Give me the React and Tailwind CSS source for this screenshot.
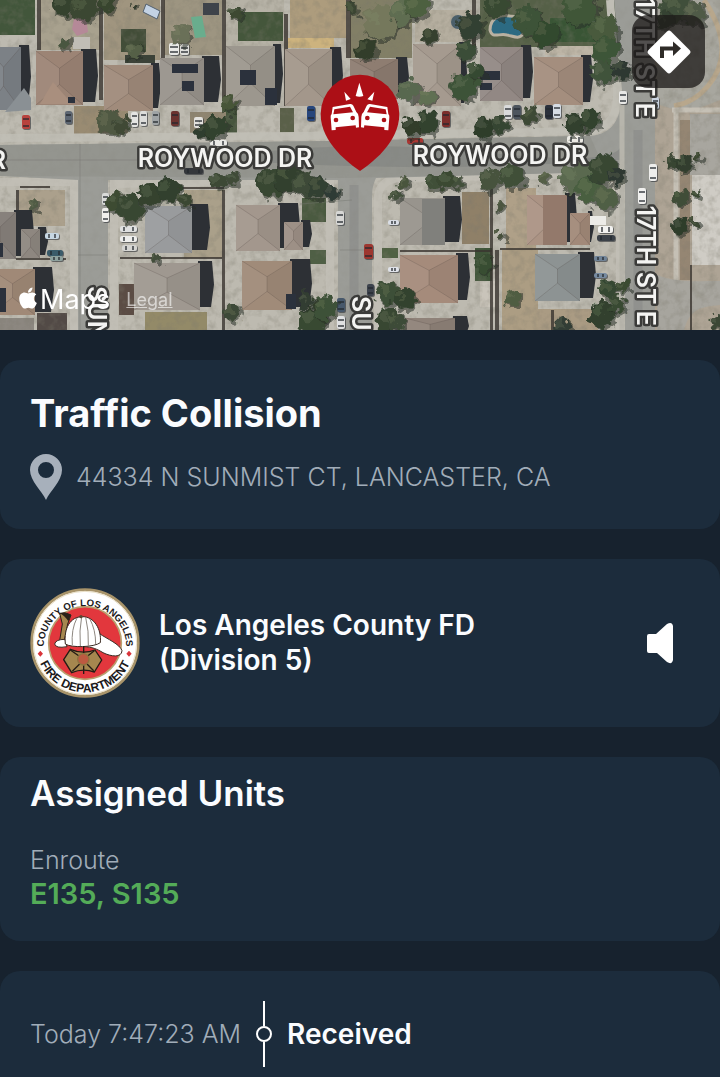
import { FaApple } from 'react-icons/fa'

// [x, y, width, height, roof colour, shadow width]
const ROOFS = [
  [-14, 47, 35, 63, '#7c8186', 10],
  [36, 51, 47, 54, '#9c8475', 15],
  [104, 65, 49, 46, '#a08b7b', 8],
  [160, 58, 44, 47, '#98938c', 17],
  [226, 46, 49, 60, '#9c978e', 8],
  [285, 49, 47, 57, '#a3978b', 11],
  [350, 59, 48, 40, '#8e7d71', 11],
  [413, 44, 48, 62, '#a59a8f', 6],
  [480, 47, 43, 54, '#928884', 10],
  [534, 57, 49, 48, '#a48e7e', 10],
  [-16, 212, 32, 47, '#87817c', 18],
  [21, 229, 19, 29, '#8e8780', 8],
  [-10, 269, 45, 46, '#a08977', 19],
  [145, 206, 47, 47, '#999b9d', 18],
  [134, 263, 66, 47, '#9f9890', 14],
  [236, 205, 44, 46, '#a3978d', 20],
  [284, 222, 19, 28, '#9d9086', 9],
  [242, 261, 50, 49, '#a08b79', 20],
  [400, 198, 45, 47, '#98948d', 17],
  [400, 255, 58, 48, '#a58b7b', 12],
  [405, 318, 50, 20, '#8f8279', 14],
  [527, 195, 40, 50, '#ab9384', 10],
  [570, 213, 20, 32, '#a28979', 4],
  [535, 254, 45, 47, '#8d9393', 16],
]

// [x, y, width, height, colour]
const YARDS = [
  [0, 0, 35, 35, '#42563b'],
  [40, 0, 60, 50, '#a8a18e'],
  [104, 0, 56, 60, '#a0957f'],
  [121, 29, 25, 23, '#424d38'],
  [164, 0, 58, 55, '#9d9581'],
  [226, 0, 58, 46, '#b6b2a6'],
  [238, 12, 45, 29, '#44563b'],
  [290, 0, 56, 38, '#ad9c7d'],
  [288, 38, 46, 10, '#cdb37e'],
  [350, 0, 62, 58, '#827f66'],
  [415, 10, 58, 32, '#b5ae9f'],
  [480, 0, 140, 47, '#556047'],
  [550, 18, 46, 24, '#395535'],
  [545, 46, 50, 9, '#beb6a7'],
  [224, 95, 13, 38, '#46553d'],
  [280, 108, 14, 25, '#5a6049'],
  [74, 106, 54, 29, '#998b72'],
  [190, 112, 36, 22, '#8f8570'],
  [19, 190, 46, 36, '#aba08c'],
  [184, 190, 38, 68, '#aaa08a'],
  [302, 198, 28, 24, '#4a5a40'],
  [310, 250, 18, 14, '#4f5f45'],
  [382, 248, 16, 10, '#506244'],
  [462, 192, 27, 52, '#8f8068'],
  [506, 188, 30, 62, '#afa088'],
  [502, 250, 36, 80, '#ac9d83'],
  [475, 248, 17, 33, '#3f5539'],
  [480, 281, 15, 26, '#c9c4ba'],
  [145, 312, 62, 18, '#938a68'],
  [119, 284, 15, 31, '#5b4c44'],
  [37, 313, 30, 17, '#524a46'],
  [0, 318, 34, 12, '#8c8780'],
  [538, 309, 60, 21, '#aa9b83'],
  [690, 114, 30, 61, '#a8a69f'],
  [692, 175, 28, 90, '#cfccc5'],
  [680, 120, 10, 160, '#958673'],
]

const FENCES = [
  [37, 0, 4, 50], [99, 0, 4, 100], [161, 0, 4, 58], [222, 0, 4, 100],
  [284, 14, 4, 92], [346, 0, 5, 58], [472, 0, 4, 48], [222, 190, 3, 140],
  [16, 190, 3, 38], [490, 188, 3, 142], [16, 258, 50, 2], [120, 257, 102, 2],
  [400, 250, 92, 2], [500, 248, 90, 2], [495, 250, 4, 80], [551, 310, 3, 20],
  [20, 186, 30, 2], [140, 187, 84, 2], [690, 265, 2, 65],
]

// [x, y, width, height]
const PANELS = [
  [172, 64, 26, 9], [182, 81, 12, 10], [240, 70, 16, 15], [265, 88, 12, 17],
  [480, 71, 20, 9], [480, 83, 12, 7], [286, 294, 10, 15], [68, 97, 7, 6],
  [0, 288, 6, 24], [0, 243, 3, 14],
]

// [x, y, radius, colour]
const TREES = [
  [63, 4, 13, '#35422f'], [84, 8, 14, '#3a4631'], [107, 3, 10, '#37452f'],
  [64, 43, 6, '#4a5640'], [133, 50, 9, '#556047'], [182, 35, 10, '#6b7058'],
  [133, 5, 4, '#30392b'], [108, 122, 13, '#4f5842'], [122, 125, 9, '#3f4836'],
  [203, 131, 10, '#2f3d2d'], [215, 127, 12, '#33432f'], [228, 104, 9, '#475439'],
  [352, 8, 7, '#3a4431'], [380, 22, 18, '#74785c'], [402, 12, 14, '#5f6d51'],
  [417, 6, 13, '#4e6040'], [365, 50, 11, '#333e2b'], [430, 36, 9, '#35402e'],
  [408, 90, 12, '#596850'], [427, 97, 9, '#616f53'], [412, 127, 11, '#303d2c'],
  [427, 122, 12, '#32422f'], [465, 50, 11, '#3b4d37'], [464, 86, 15, '#3e5339'],
  [476, 72, 9, '#364932'], [470, 26, 14, '#323f30'], [484, 128, 11, '#2f3d2c'],
  [500, 124, 9, '#364532'], [496, 6, 13, '#394a32'], [528, 20, 15, '#3e5238'],
  [545, 34, 14, '#32482e'], [580, 8, 19, '#405639'], [604, 30, 15, '#485a3d'],
  [606, 50, 14, '#3e5437'], [602, 72, 13, '#40523b'], [622, 70, 10, '#2d3930'],
  [574, 124, 12, '#303f2d'], [590, 120, 11, '#32422f'], [530, 115, 9, '#3e4a35'],
  [676, 8, 17, '#414f3a'], [694, 14, 12, '#505a46'], [664, 20, 10, '#364333'],
  [115, 201, 11, '#3d4b33'], [130, 208, 14, '#394732'], [150, 194, 13, '#34432f'],
  [168, 190, 13, '#31402d'], [184, 200, 8, '#3b4732'], [218, 181, 9, '#3c4a36'],
  [232, 178, 8, '#3f4c39'], [271, 183, 15, '#374632'], [288, 178, 15, '#32412e'],
  [304, 184, 13, '#3c4a37'], [318, 188, 11, '#334030'], [330, 193, 8, '#2f3a34'],
  [395, 195, 6, '#434f3b'], [404, 182, 7, '#4a553e'], [432, 182, 9, '#404f39'],
  [446, 180, 10, '#3a4933'], [458, 182, 7, '#43503a'], [489, 180, 12, '#46533e'],
  [512, 176, 13, '#415039'], [544, 178, 7, '#545f46'], [575, 178, 16, '#5a694f'],
  [590, 190, 15, '#495e40'], [603, 168, 16, '#374633'], [606, 198, 13, '#505f45'],
  [616, 176, 9, '#2d3831'], [500, 205, 5, '#4b5540'], [500, 236, 6, '#46503b'],
  [33, 205, 5, '#505a45'], [312, 322, 15, '#384a33'], [324, 308, 13, '#3e5137'],
  [306, 300, 9, '#333e33'], [388, 293, 13, '#3e4f37'], [404, 298, 12, '#33422e'],
  [388, 320, 13, '#374732'], [396, 322, 10, '#3e4c37'], [512, 298, 9, '#505d43'],
  [484, 264, 9, '#384d32'], [608, 290, 10, '#354731'], [622, 286, 7, '#3b4b33'],
  [602, 314, 14, '#31412e'], [616, 304, 9, '#394933'], [562, 326, 9, '#303c34'],
  [672, 162, 8, '#374432'], [684, 164, 9, '#313e2d'], [697, 157, 5, '#3c4833'],
  [680, 197, 8, '#3f4e38'], [696, 194, 5, '#3b4933'], [680, 226, 9, '#2f3c2c'],
  [694, 222, 5, '#3c4835'], [232, 312, 9, '#3e4a38'],
  [155, 258, 6, '#434e3b'], [236, 12, 7, '#3d4a33'], [718, 322, 8, '#3a4636'],
]

// [x, y, width, height, colour]
const CARS = [
  [22, 115, 8, 14, '#b8423d'], [65, 111, 7, 13, '#5d6672'], [131, 112, 7, 15, '#e4e4e2'],
  [140, 111, 7, 15, '#dcdcda'], [152, 111, 7, 14, '#9fa3a5'], [171, 111, 8, 15, '#6b3330'],
  [194, 117, 9, 11, '#e3e2de'], [307, 106, 8, 15, '#27467c'], [442, 111, 8, 16, '#7c2e2b'],
  [504, 105, 8, 14, '#d9dadb'], [513, 105, 8, 14, '#4d555e'], [545, 105, 8, 14, '#2b303b'],
  [553, 104, 8, 14, '#d6dce4'], [210, 140, 17, 6, '#e9e9e6'], [184, 168, 19, 6, '#34373b'],
  [407, 138, 16, 6, '#a93632'], [567, 136, 16, 7, '#eceae4'], [619, 91, 8, 13, '#e8e8e6'],
  [652, 97, 7, 12, '#c9d3df'], [649, 164, 8, 17, '#eeeeec'], [638, 188, 8, 16, '#f0f0ee'],
  [102, 193, 7, 12, '#d9dad8'], [102, 208, 7, 14, '#f0efec'], [120, 226, 17, 6, '#dfe0e0'],
  [120, 236, 17, 6, '#eeeeec'], [122, 245, 15, 6, '#d5d5d2'], [45, 233, 14, 6, '#c6d6e2'],
  [47, 250, 16, 6, '#3a5b6a'], [50, 256, 13, 5, '#8ea19e'], [336, 211, 8, 14, '#d7d7d5'],
  [364, 244, 9, 15, '#9d3730'], [388, 220, 11, 5, '#d9dde5'], [388, 267, 11, 5, '#e0e3ea'],
  [367, 284, 7, 12, '#3d434d'], [337, 298, 8, 14, '#47586b'], [337, 316, 8, 13, '#dfe0e2'],
  [598, 226, 15, 7, '#f2f2f0'], [597, 235, 18, 6, '#3b4148'], [594, 256, 13, 5, '#6f8296'],
  [594, 273, 13, 5, '#768aa0'], [169, 43, 10, 12, '#e9e9e6'], [180, 44, 9, 11, '#dfdfdc'],
]

const shade = '#2d3035'

function Roof({ x, y, w, h, fill, shadow }) {
  const cx = x + w / 2
  const ridgeTop = y + h * 0.32
  const ridgeEnd = y + h * 0.62
  return (
    <g>
      <path d={`M${x + w - 2} ${y - 2}h${shadow}l2 ${h * 0.5}l-3 ${h * 0.5 - 1}h-${shadow}z`} fill={shade} />
      <rect x={x} y={y} width={w} height={h} fill={fill} />
      <path d={`M${x} ${y}L${cx} ${ridgeTop}V${ridgeEnd}L${x} ${y + h}z`} fill="#fff" opacity="0.05" />
      <path d={`M${x + w} ${y}L${cx} ${ridgeTop}V${ridgeEnd}L${x + w} ${y + h}z`} fill="#000" opacity="0.05" />
      <path
        d={`M${x} ${y}L${cx} ${ridgeTop}L${x + w} ${y}M${cx} ${ridgeTop}V${ridgeEnd}M${x} ${y + h}L${cx} ${ridgeEnd}L${x + w} ${y + h}`}
        fill="none"
        stroke="#4b4039"
        strokeWidth="0.8"
        opacity="0.28"
      />
    </g>
  )
}

function Car({ x, y, w, h, fill }) {
  const tall = h > w
  return (
    <g>
      <rect x={x + 1} y={y + 1} width={w} height={h} rx="2" fill={shade} opacity="0.6" />
      <rect x={x} y={y} width={w} height={h} rx="2" fill={fill} />
      {tall ? (
        <path d={`M${x + 1} ${y + 4}h${w - 2}M${x + 1} ${y + h - 3}h${w - 2}`} stroke="#22272d" strokeWidth="2" opacity="0.65" />
      ) : (
        <path d={`M${x + 4} ${y + 1}v${h - 2}M${x + w - 4} ${y + 1}v${h - 2}`} stroke="#22272d" strokeWidth="2" opacity="0.65" />
      )}
    </g>
  )
}

function Satellite() {
  return (
    <svg
      viewBox="0 0 720 330"
      preserveAspectRatio="xMidYMid slice"
      className="block h-full w-full"
      role="img"
      aria-label="Satellite map"
    >
      <defs>
        <filter id="foliage" x="-5%" y="-5%" width="110%" height="110%">
          <feTurbulence type="fractalNoise" baseFrequency="0.13" numOctaves="2" seed="4" />
          <feDisplacementMap in="SourceGraphic" scale="14" xChannelSelector="R" yChannelSelector="G" />
        </filter>
        <filter id="terrain" x="0" y="0" width="100%" height="100%">
          <feTurbulence type="fractalNoise" baseFrequency="0.12" numOctaves="3" seed="9" />
          <feColorMatrix values="0 0 0 0 0.2  0 0 0 0 0.19  0 0 0 0 0.15  1.6 0 0 0 -0.68" />
        </filter>
      </defs>

      <rect width="720" height="330" fill="#bdbab0" />

      {/* right side lots */}
      <path d="M655 0h65v330h-65z" fill="#aea495" />
      <path d="M657 0h63v100c-20 8-34 14-44 10l-19-6z" fill="#a8a79f" />
      <path d="M704 0c20 30 26 60 4 86c-10 12-22 18-34 20" fill="none" stroke="#b8a78c" strokeWidth="5" />
      <path d="M672 110h48M676 110v210" stroke="#c5c0b5" strokeWidth="5" fill="none" />
      <path d="M657 275c20 8 40 6 63 6v24c-20 2-30 4-36 25h-27z" fill="#a7a59e" />

      {YARDS.map(([x, y, w, h, fill]) => (
        <rect key={`${x}-${y}`} x={x} y={y} width={w} height={h} fill={fill} />
      ))}

      <rect width="720" height="330" filter="url(#terrain)" opacity="0.4" />

      {/* streets */}
      <path d="M0 138L300 136L590 131C612 128 618 112 617 90L610 0" fill="none" stroke="#c0beb5" strokeWidth="8" />
      <path d="M0 182H74V330M114 330V184L330 180V330M378 330V196Q380 180 400 178L612 174Q620 176 620 190V330" fill="none" stroke="#c1beb5" strokeWidth="8" />
      <path d="M0 145L330 141L590 136C612 134 622 120 622 90L614 0H655V330H625V180L606 172L376 178Q372 186 372 196V330H338V180H108V330H78V180L0 176z" fill="#9b9c97" />
      <path d="M0 145L330 141L590 136L606 172L340 178L0 176z" fill="#94958f" />
      <path d="M230 156Q350 138 480 152T620 148V160Q480 170 350 166T230 156z" fill="#737676" opacity="0.35" />
      <path d="M354 185V330M638 130V330" stroke="#777a7b" strokeWidth="9" opacity="0.3" />
      <path d="M622 95V330" stroke="#b7b5ac" strokeWidth="5" />
      <path d="M80 144V330M0 160H240M78 255H108M340 250H372M300 204L352 200" stroke="#74756f" strokeWidth="0.8" fill="none" opacity="0.55" />
      <rect width="720" height="330" filter="url(#terrain)" opacity="0.12" />

      {FENCES.map(([x, y, w, h]) => (
        <rect key={`${x}-${y}`} x={x} y={y} width={w} height={h} fill="#3a342f" opacity="0.8" />
      ))}

      {/* pools and backyard things */}
      <path d="M191 17l11-1 4 21-11 1z" fill="#69ad8d" />
      <path d="M490 30c0-12 10-16 20-14c12 0 16 10 13 18c-4 6-10 2-16 1c-8-2-15 4-17-5z" fill="#2c6a82" stroke="#b9b1a1" strokeWidth="3" />
      <path d="M146 4l14 7-3 8-14-7z" fill="#c3d2e4" stroke="#53606d" />
      <path d="M74 19l12-2 2 15-11 4-5-7z" fill="#b58998" />
      <rect x="73" y="37" width="17" height="12" fill="#c1bdb6" />
      <rect x="203" y="3" width="16" height="12" fill="#3e434a" />
      <rect x="125" y="55" width="30" height="8" fill="#3c4238" />
      <circle cx="458" cy="22" r="7" fill="#4b5f6a" />
      <path d="M584 14l18 15" stroke="#d9d8d2" strokeWidth="2" />

      {ROOFS.map(([x, y, w, h, fill, shadow]) => (
        <Roof key={`${x}-${y}`} x={x} y={y} w={w} h={h} fill={fill} shadow={shadow} />
      ))}
      {/* lower gables */}
      <path d="M5 112L24 88L31 98V110z" fill="#8a9094" />
      <path d="M40 104L53 82L72 104z" fill="#a98f7e" />
      <path d="M422 199h23v46h-23z" fill="#80807c" />
      <path d="M543 195h24v50h-24z" fill="#93796b" />
      <rect x="590" y="216" width="16" height="9" fill="#ecebe7" />

      {PANELS.map(([x, y, w, h]) => (
        <rect key={`${x}-${y}`} x={x} y={y} width={w} height={h} fill="#2b313c" />
      ))}
      {CARS.map(([x, y, w, h, fill]) => (
        <Car key={`${x}-${y}`} x={x} y={y} w={w} h={h} fill={fill} />
      ))}

      <g filter="url(#foliage)">
        {TREES.map(([x, y, r, fill]) => (
          <g key={`${x}-${y}`}>
            <circle cx={x + 2} cy={y + 2} r={r} fill="#262d25" opacity="0.55" />
            <circle cx={x} cy={y} r={r - 1} fill={fill} />
            <circle cx={x - r * 0.3} cy={y - r * 0.3} r={r * 0.4} fill="#8a9572" opacity="0.2" />
          </g>
        ))}
      </g>

      <g
        fontFamily="Inter, sans-serif"
        fontSize="25"
        fontWeight="600"
        fill="#f4f4f2"
        stroke="#3b3b39"
        strokeWidth="5"
        strokeLinejoin="round"
        paintOrder="stroke"
      >
        <text x="225" y="167" textAnchor="middle">ROYWOOD DR</text>
        <text x="500" y="164" textAnchor="middle">ROYWOOD DR</text>
        <text x="6" y="169" textAnchor="end">R</text>
        <text transform="translate(636 118) rotate(90)" textAnchor="end">17TH ST E</text>
        <text transform="translate(637 326) rotate(90)" textAnchor="end">17TH ST E</text>
        <text transform="translate(352 296) rotate(90)">SU</text>
        <text transform="translate(88 286) rotate(90)">SUN</text>
      </g>
    </svg>
  )
}

function CollisionPin() {
  const car = (
    <>
      <path
        d="M98 141L150 132Q157 131 160 137L169 156Q176 161 176 171L177 202L168 203L167 196L107 202V210L95 211L92 172Q91 166 95 162z"
        fill="#fff"
      />
      <path d="M103 148L150 140L159 157L100 163z" fill="#ac0f16" />
      <circle cx="108" cy="180" r="7" fill="#ac0f16" />
      <circle cx="158" cy="174" r="7" fill="#ac0f16" />
    </>
  )
  return (
    <svg viewBox="60 42 240 294" className="h-[98px] w-20" role="img" aria-label="Incident location">
      <path d="M180 333C150 312 62 250 62 162A118 118 0 0 1 298 162C298 250 210 312 180 333z" fill="#ac0f16" />
      {car}
      <g transform="translate(360 0) scale(-1 1)">{car}</g>
      <path d="M178 68L167 108Q178 112 190 108zM133 95L152 117L138 122zM223 95L202 118L217 122z" fill="#fff" />
    </svg>
  )
}

function DirectionsIcon() {
  return (
    <svg viewBox="0 0 46 46" className="size-[46px]" aria-hidden="true">
      <path d="M21 2.500Q23 .5 25 2.500L43.500 21Q45.500 23 43.500 25L25 43.500Q23 45.500 21 43.500L2.500 25Q.5 23 2.500 21z" fill="#fff" />
      <path d="M16 29V19.500H29" fill="none" stroke="#2e2b28" strokeWidth="4" />
      <path d="M27 12.500L35 19.500L27 27z" fill="#2e2b28" />
    </svg>
  )
}

function DepartmentSeal() {
  return (
    <svg viewBox="29 22 330 330" className="size-[110px] shrink-0" role="img" aria-label="Department seal">
      <defs>
        <path id="sealTop" d="M70 200A124 124 0 1 1 318 200" />
        <path id="sealBottom" d="M46 187A148 148 0 0 0 342 187" />
      </defs>
      <circle cx="194" cy="187" r="160" fill="#fff" stroke="#a8946a" strokeWidth="8" />
      <circle cx="194" cy="187" r="155" fill="none" stroke="#e9dfc6" strokeWidth="3" />
      <circle cx="194" cy="187" r="109" fill="#e2373d" stroke="#b9a06f" strokeWidth="5" />
      <g fontFamily="'Liberation Sans', sans-serif" fontWeight="700" fill="#1c1a1b" textAnchor="middle">
        <text fontSize="29">
          <textPath href="#sealTop" startOffset="50%">COUNTY OF LOS ANGELES</textPath>
        </text>
        <text fontSize="36">
          <textPath href="#sealBottom" startOffset="50%">FIRE DEPARTMENT</textPath>
        </text>
      </g>
      <path d="M60 210l8 9-8 9-8-9zM326 210l8 9-8 9-8-9z" fill="#d9343a" />

      {/* helmet */}
      <path d="M118 98Q134 92 152 103L142 130L130 190L118 180L126 130z" fill="#a5874f" stroke="#2a2119" strokeWidth="3" />
      <path d="M118 98Q134 92 152 103L144 122Q132 104 118 98z" fill="#2a2119" />
      <path d="M134 176Q106 176 103 190Q106 204 140 198z" fill="#fff" stroke="#3a2a22" strokeWidth="3" />
      <path d="M236 158C262 176 298 190 305 210C304 232 272 228 248 216C232 206 214 198 190 198z" fill="#fff" stroke="#3a2a22" strokeWidth="3" />
      <path d="M135 190C130 142 150 108 186 108C222 108 244 146 240 186C222 200 152 202 135 190z" fill="#fff" stroke="#3a2a22" strokeWidth="3" />
      <path d="M170 112Q152 146 156 194M184 108Q176 150 180 196M196 110Q206 150 204 196M208 114Q226 146 226 190" fill="none" stroke="#8d8780" strokeWidth="3" />
      <circle cx="182" cy="108" r="5" fill="#5a4630" />

      {/* maltese cross */}
      <path d="M130 237L150 206Q188 222 224 208L244 238L222 274Q188 262 154 276z" fill="#a5874f" stroke="#241b14" strokeWidth="4" />
      <path d="M190 196v22M190 254v26M150 208l26 18M222 210l-20 16M156 272l22-22M220 270l-20-20" stroke="#241b14" strokeWidth="4" />
      <circle cx="189" cy="236" r="17" fill="#bd5a41" stroke="#8d7340" strokeWidth="4" />
    </svg>
  )
}

function Card({ className = '', children }) {
  return <section className={`bg-[#1c2c3c] px-[30px] ${className}`}>{children}</section>
}

export default function App() {
  return (
    <main className="flex min-h-screen flex-col gap-[30px] bg-[#17222e] font-[Inter,sans-serif] text-[#fafcff]">
      <div className="relative h-[330px] overflow-hidden">
        <Satellite />
        <div className="absolute inset-x-0 top-[74px] flex justify-center">
          <CollisionPin />
        </div>
        <button
          type="button"
          aria-label="Directions"
          className="absolute right-[15px] top-[15px] flex size-[73px] items-center justify-center rounded-2xl bg-[#1c1a18]/75"
        >
          <DirectionsIcon />
        </button>
        <div className="absolute bottom-[14px] left-4 flex items-center text-white">
          <FaApple size={24} className="mb-1" aria-hidden="true" />
          <span className="text-[27px] leading-8">Maps</span>
          <a href="#legal" className="ml-4 text-[18px] leading-6 text-white/60 underline">
            Legal
          </a>
        </div>
      </div>

      <Card className="rounded-[20px] pt-[31px] pb-[29px]">
        <h1 className="text-[38px] font-bold leading-[44px]">Traffic Collision</h1>
        <div className="mt-[19px] flex items-center gap-[14px] text-[#a1adb9]">
          <svg viewBox="0 0 32 46" className="h-[46px] w-8 shrink-0" aria-hidden="true">
            <path
              fillRule="evenodd"
              d="M16 0A16 16 0 0 1 32 16C32 27 20 37 16 46C12 37 0 27 0 16A16 16 0 0 1 16 0zM16 8A8 8 0 1 0 16 24A8 8 0 1 0 16 8z"
              fill="#a7b0bb"
            />
          </svg>
          <p className="text-[25px] font-light leading-8">44334 N SUNMIST CT, LANCASTER, CA</p>
        </div>
      </Card>

      <Card className="flex items-center gap-[19px] rounded-[20px] py-[29px]">
        <DepartmentSeal />
        <h2 className="flex-1 text-[28px] font-semibold leading-[35px]">
          Los Angeles County FD
          <br />
          (Division 5)
        </h2>
        <button type="button" aria-label="Play audio" className="mr-4 shrink-0">
          <svg viewBox="0 0 28 42" className="h-[42px] w-7" aria-hidden="true">
            <path d="M3 12H10L21 2Q26 -1 27 4V38Q26 43 21 40L11 31H3Q1 31 1 29V14Q1 12 3 12z" fill="#fff" />
          </svg>
        </button>
      </Card>

      <Card className="rounded-[20px] pt-[15px] pb-[30px]">
        <h2 className="text-[35px] font-semibold leading-[42px]">Assigned Units</h2>
        <p className="mt-[30px] text-[25px] font-light leading-8 text-[#a1adb9]">Enroute</p>
        <p className="text-[29px] font-semibold leading-[35px] text-[#54ac58]">E135, S135</p>
      </Card>

      <Card className="flex-1 rounded-t-[20px] pt-[30px]">
        <div className="flex items-center">
          <time className="text-[25px] font-light leading-8 text-[#a1adb9]">Today 7:47:23 AM</time>
          <svg viewBox="0 0 18 66" className="mx-[14px] h-[66px] w-[18px] shrink-0" aria-hidden="true">
            <path d="M9 0V25M9 41V66" stroke="#fff" strokeWidth="2" />
            <circle cx="9" cy="33" r="7" fill="none" stroke="#fff" strokeWidth="2" />
          </svg>
          <p className="text-[28px] font-semibold leading-8">Received</p>
        </div>
      </Card>
    </main>
  )
}
